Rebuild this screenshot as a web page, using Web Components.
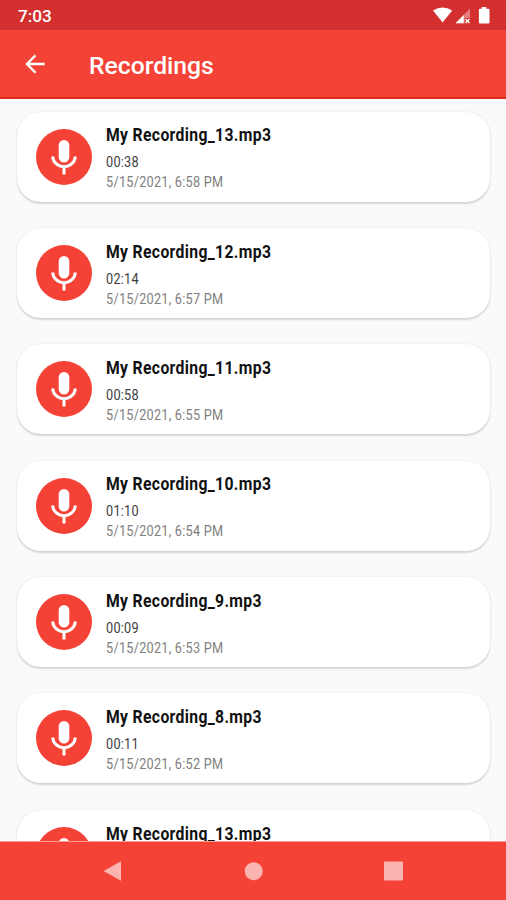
<!DOCTYPE html>
<html lang="en">
<head>
<meta charset="utf-8">
<title>Recordings</title>
<style>
    body {
        margin: 0;
        height: 900px;
        overflow: hidden;
        background: #fafafa;
        font-family: Roboto, "Liberation Sans", sans-serif;
    }
</style>
</head>
<body>
<recorder-screen></recorder-screen>

<script>
class StatusBar extends HTMLElement {
    constructor() {
        super();

        const time = this.getAttribute("time") || "";

        this.root = this.attachShadow({ mode: "open" });
        this.root.innerHTML = `
            <style>
            :host {
                display: flex;
                justify-content: space-between;
                box-sizing: border-box;
                height: 30px;
                padding: 0 16px 0 18px;
                background: #d32f2f;
                color: #fff;
            }
            span {
                font-size: 17.2px;
                font-weight: 500;
                line-height: 32px;
            }
            svg { display: block; }
            </style>
            <span>${time}</span>
            <svg width="58" height="30" viewBox="432 0 58 30" fill="#fff">
            <path d="M433 10.6Q442.5 4.4 452.2 10.6L442.6 22.6Z"/>
            <path d="M470 8.5V23.2H455.5Z" opacity=".38"/>
            <path d="M463.7 15V23.2H455.5Z"/>
            <path d="M464.7 18h5.3v5.5h-5.3z" fill="#d32f2f"/>
            <path d="M465.5 19l4 4M469.5 19l-4 4" stroke="#fff" stroke-width="1.4"/>
            <path d="M481.8 7h4.6v1.7h2q1.1 0 1.1 1.1v12.7q0 1.1-1.1 1.1h-8.4q-1.1 0-1.1-1.1V9.8q0-1.1 1.1-1.1h1.8z"/>
            </svg>
        `;
    }
}

class AppBar extends HTMLElement {
    constructor() {
        super();

        this.root = this.attachShadow({ mode: "open" });
        this.root.innerHTML = `
            <style>
            :host {
                display: flex;
                align-items: center;
                box-sizing: border-box;
                height: 69px;
                padding: 1px 0 0 20px;
                background: #f44336;
                border-bottom: 2px solid #e02a1b;
                color: #fff;
            }
            svg {
                flex: none;
                margin-right: 39px;
            }
            .title {
                font-size: 24.7px;
                font-weight: 500;
                line-height: 30px;
                padding-top: 4px;
            }
            </style>
            <svg width="30" height="30" viewBox="0 0 24 24" fill="#fff">
            <path d="M19.7 11H7.83l5.2-5.2L11.8 4.4 4.2 12l7.6 7.6 1.3-1.3L7.83 13H19.7v-2z"/>
            </svg>
            <div class="title"><slot></slot></div>
        `;
    }
}

class RecordingCard extends HTMLElement {
    constructor() {
        super();

        this.root = this.attachShadow({ mode: "open" });
        this.root.innerHTML = `
            <style>
            :host {
                display: flex;
                box-sizing: border-box;
                height: 90px;
                padding: 17px 19px 0;
                border-radius: 24px;
                background: #fff;
                box-shadow: 0 1.5px 2px rgba(0, 0, 0, .14), 0 0 2px rgba(0, 0, 0, .08);
            }
            svg {
                flex: none;
                margin-right: 14px;
            }
            .info {
                margin-top: -5.3px;
                white-space: nowrap;
            }
            /* condensed look */
            .info div {
                transform: scaleX(.86);
                transform-origin: 0 0;
            }
            .name {
                font-size: 18.3px;
                font-weight: 700;
                letter-spacing: .4px;
                line-height: 24px;
                color: #111;
            }
            .length, .date {
                font-size: 14.76px;
                letter-spacing: .3px;
                line-height: 20px;
            }
            .length {
                margin-top: 5px;
                color: #3c3c3c;
            }
            .date { color: #808080; }
            </style>
            <svg width="56" height="56" viewBox="0 0 56 56">
            <circle cx="28" cy="28" r="28" fill="#f44336"/>
            <rect x="22.7" y="11" width="10.6" height="22.5" rx="5.3" fill="#fff"/>
            <path d="M16.8 27.5a11.2 10.2 0 0 0 22.4 0M28 37.8v7.7" fill="none" stroke="#fff" stroke-width="3"/>
            </svg>
            <div class="info">
            <div class="name"><slot></slot></div>
            <div class="length">${this.getAttribute("length")}</div>
            <div class="date">${this.getAttribute("date")}</div>
            </div>
        `;
    }
}

class NavBar extends HTMLElement {
    constructor() {
        super();

        this.root = this.attachShadow({ mode: "open" });
        this.root.innerHTML = `
            <style>
            :host {
                display: flex;
                justify-content: space-between;
                align-items: center;
                box-sizing: border-box;
                height: 59px;
                padding: 0 103px 1px;
                background: #f44336;
                border-top: 1px solid #f99c94;
            }
            svg { display: block; }
            </style>
            <svg width="20" height="20" fill="#fbb4af"><path d="M.5 10L18 .3V19.7Z"/></svg>
            <svg width="20" height="20" fill="#fbb4af"><circle cx="10.7" cy="10.2" r="9"/></svg>
            <svg width="20" height="20" fill="#fbb4af"><rect x="1" y=".5" width="19" height="19" rx="1"/></svg>
        `;
    }
}

class RecorderScreen extends HTMLElement {
    constructor() {
        super();

        const recordings = [
            ["My Recording_13.mp3", "00:38", "5/15/2021, 6:58 PM"],
            ["My Recording_12.mp3", "02:14", "5/15/2021, 6:57 PM"],
            ["My Recording_11.mp3", "00:58", "5/15/2021, 6:55 PM"],
            ["My Recording_10.mp3", "01:10", "5/15/2021, 6:54 PM"],
            ["My Recording_9.mp3", "00:09", "5/15/2021, 6:53 PM"],
            ["My Recording_8.mp3", "00:11", "5/15/2021, 6:52 PM"],
            ["My Recording_13.mp3", "", ""],
        ];
        const cards = recordings
            .map(([name, length, date]) =>
                `<recording-card length="${length}" date="${date}">${name}</recording-card>`)
            .join("");

        this.root = this.attachShadow({ mode: "open" });
        this.root.innerHTML = `
            <style>
            :host {
                display: flex;
                flex-direction: column;
                width: 506px;
                height: 900px;
                background: #fafafa;
            }
            status-bar, app-bar, nav-bar { flex: none; }
            main {
                display: grid;
                grid-auto-rows: 90px;
                row-gap: 26.4px;
                box-sizing: border-box;
                flex: 1;
                min-height: 0;
                padding: 12.5px 16px 0 17px;
                overflow: hidden;
            }
            </style>
            <status-bar time="7:03"></status-bar>
            <app-bar>Recordings</app-bar>
            <main>${cards}</main>
            <nav-bar></nav-bar>
        `;
    }
}

window.customElements.define("status-bar", StatusBar);
window.customElements.define("app-bar", AppBar);
window.customElements.define("recording-card", RecordingCard);
window.customElements.define("nav-bar", NavBar);
window.customElements.define("recorder-screen", RecorderScreen);
</script>
</body>
</html>
